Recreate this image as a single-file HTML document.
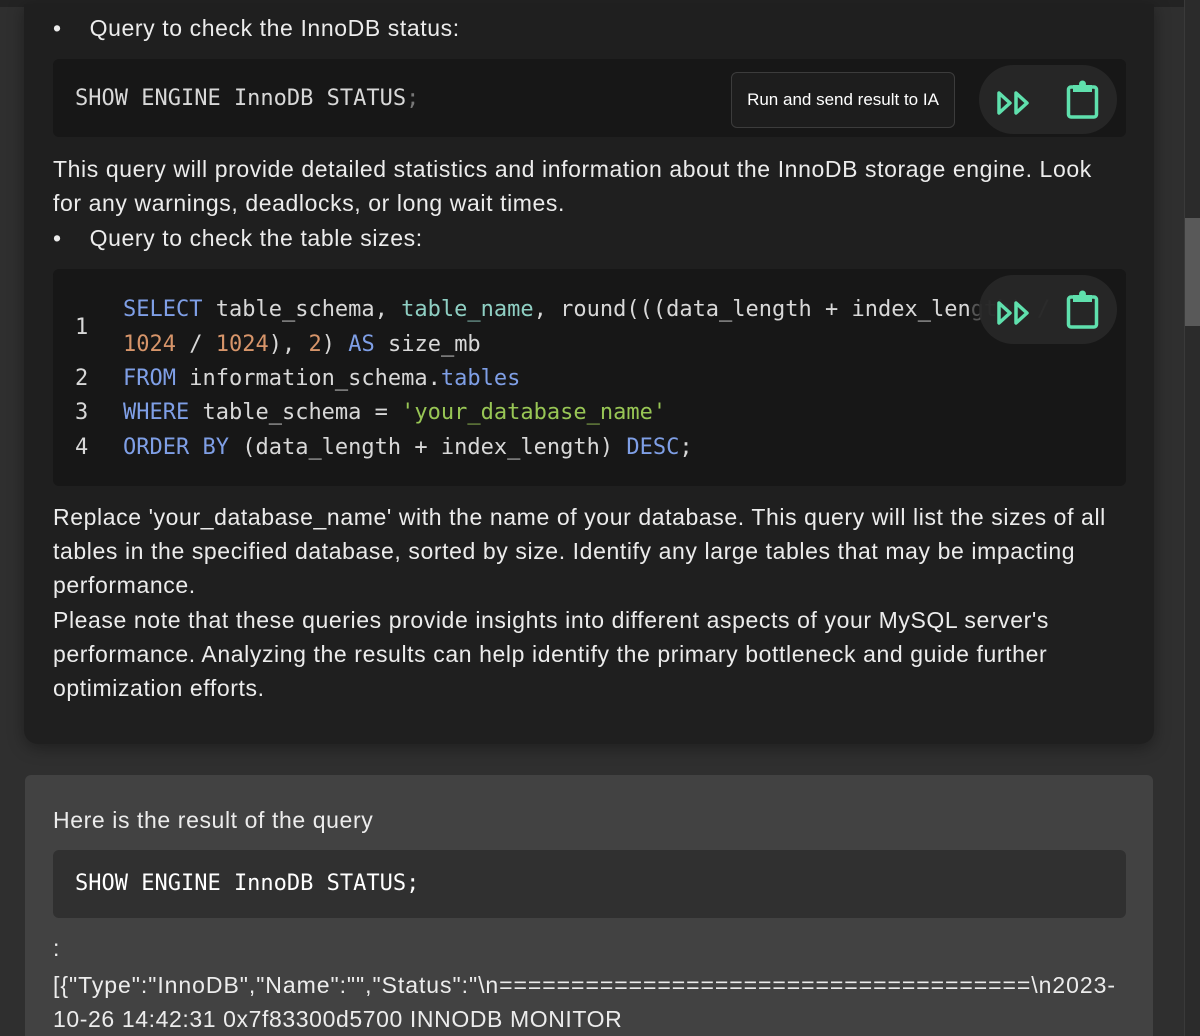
<!DOCTYPE html>
<html style="overflow:hidden"><head><style>
*{margin:0;padding:0;box-sizing:border-box}
html,body{width:1200px;height:1036px;overflow:hidden}
body{background:#2f2f2f;font-family:"Liberation Sans",sans-serif;color:#ececec;position:relative}
.top{position:absolute;left:0;top:0;width:1200px;height:7px;background:#232323}
.card1{position:absolute;left:24px;top:4px;width:1130px;height:740px;background:#1f1f1f;border-radius:0 0 14px 14px;box-shadow:0 4px 16px rgba(0,0,0,.35)}
.card2{position:absolute;left:25px;top:775px;width:1128px;height:261px;background:#424242;border-radius:6px 6px 0 0}
.t{position:absolute;font-size:23px;letter-spacing:0.6px;line-height:34px;white-space:nowrap}
.mono{position:absolute;font-family:"DejaVu Sans Mono","Liberation Mono",monospace;font-size:22px;white-space:pre;line-height:34px;color:#d8d8d8}
.code{position:absolute;left:53px;width:1073px;background:#171717;border-radius:6px}
.pill{position:absolute;left:979px;width:138px;height:69px;background:#262626;border-radius:35px}
.btn{position:absolute;left:731px;top:72px;width:224px;height:56px;border:1px solid #3c3c3c;background:#1d1d1d;border-radius:6px;font-size:17px;line-height:54px;text-align:center;color:#fff}
.k{color:#7f9fe6}.g{color:#98c655}.o{color:#d7956a}.c{color:#8fcfc3}
.sb{position:absolute;left:1184px;top:0;width:16px;height:1036px;background:#2b2b2b;border-left:1px solid #3a3a3a}
.thumb{position:absolute;left:1185px;top:218px;width:15px;height:108px;background:#595959}
</style></head><body>
<div class="top"></div>
<div class="card1"></div>
<div class="sb"></div><div class="thumb"></div>
<div class="t" style="left:53px;top:11px">•&nbsp;&nbsp;&nbsp;&nbsp;Query to check the InnoDB status:</div>
<div class="code" style="top:59px;height:78px"></div>
<div class="mono" style="left:75px;top:82px">SHOW ENGINE InnoDB STATUS<span style="color:#777">;</span></div>
<div class="btn">Run and send result to IA</div>
<div class="pill" style="top:65px"></div>
<svg style="position:absolute;left:990px;top:65px" width="130" height="69" viewBox="0 0 130 69"><g fill="none" stroke="#5fe0ad" stroke-width="3.5" stroke-linejoin="round"><path d="M9 28 L20 38 L9 48 Z"/><path d="M26 28 L37 38 L26 48 Z"/><rect x="78.5" y="22" width="28" height="30" rx="2.5"/></g><rect x="83" y="20" width="19" height="7" fill="#5fe0ad"/><circle cx="92.5" cy="19" r="3.5" fill="#5fe0ad"/></svg>
<div class="t" style="left:53px;top:152px">This query will provide detailed statistics and information about the InnoDB storage engine. Look</div>
<div class="t" style="left:53px;top:186px">for any warnings, deadlocks, or long wait times.</div>
<div class="t" style="left:53px;top:221px">•&nbsp;&nbsp;&nbsp;&nbsp;Query to check the table sizes:</div>
<div class="code" style="top:269px;height:217px"></div>
<div class="mono" style="left:75px;top:311px">1</div>
<div class="mono" style="left:75px;top:362px">2</div>
<div class="mono" style="left:75px;top:396px">3</div>
<div class="mono" style="left:75px;top:431px">4</div>
<div class="mono" style="left:123px;top:293px"><span class="k">SELECT</span> table_schema, <span class="c">table_name</span>, round(((data_length + index_len<span style="color:#555">gth) /</span></div>
<div class="mono" style="left:123px;top:328px"><span class="o">1024</span> / <span class="o">1024</span>), <span class="o">2</span>) <span class="k">AS</span> size_mb</div>
<div class="mono" style="left:123px;top:362px"><span class="k">FROM</span> information_schema.<span class="k">tables</span></div>
<div class="mono" style="left:123px;top:396px"><span class="k">WHERE</span> table_schema = <span class="g">'your_database_name'</span></div>
<div class="mono" style="left:123px;top:431px"><span class="k">ORDER BY</span> (data_length + index_length) <span class="k">DESC</span>;</div>
<div class="pill" style="top:275px;background:rgba(40,40,40,.93)"></div>
<svg style="position:absolute;left:990px;top:275px" width="130" height="69" viewBox="0 0 130 69"><g fill="none" stroke="#5fe0ad" stroke-width="3.5" stroke-linejoin="round"><path d="M9 28 L20 38 L9 48 Z"/><path d="M26 28 L37 38 L26 48 Z"/><rect x="78.5" y="22" width="28" height="30" rx="2.5"/></g><rect x="83" y="20" width="19" height="7" fill="#5fe0ad"/><circle cx="92.5" cy="19" r="3.5" fill="#5fe0ad"/></svg>
<div class="t" style="left:53px;top:500px">Replace 'your_database_name' with the name of your database. This query will list the sizes of all</div>
<div class="t" style="left:53px;top:534px">tables in the specified database, sorted by size. Identify any large tables that may be impacting</div>
<div class="t" style="left:53px;top:568px">performance.</div>
<div class="t" style="left:53px;top:603px">Please note that these queries provide insights into different aspects of your MySQL server's</div>
<div class="t" style="left:53px;top:637px">performance. Analyzing the results can help identify the primary bottleneck and guide further</div>
<div class="t" style="left:53px;top:671px">optimization efforts.</div>
<div class="card2"></div>
<div class="t" style="left:53px;top:803px">Here is the result of the query</div>
<div class="code" style="top:850px;height:68px;background:#303030"></div>
<div class="mono" style="left:75px;top:867px;color:#fff">SHOW ENGINE InnoDB STATUS;</div>
<div class="t" style="left:53px;top:931px">:</div>
<div class="t" style="left:53px;top:968px;letter-spacing:0.95px">[{"Type":"InnoDB","Name":"","Status":"\n=====================================\n2023-</div>
<div class="t" style="left:53px;top:1002px">10-26 14:42:31 0x7f83300d5700 INNODB MONITOR</div>
</body></html>
